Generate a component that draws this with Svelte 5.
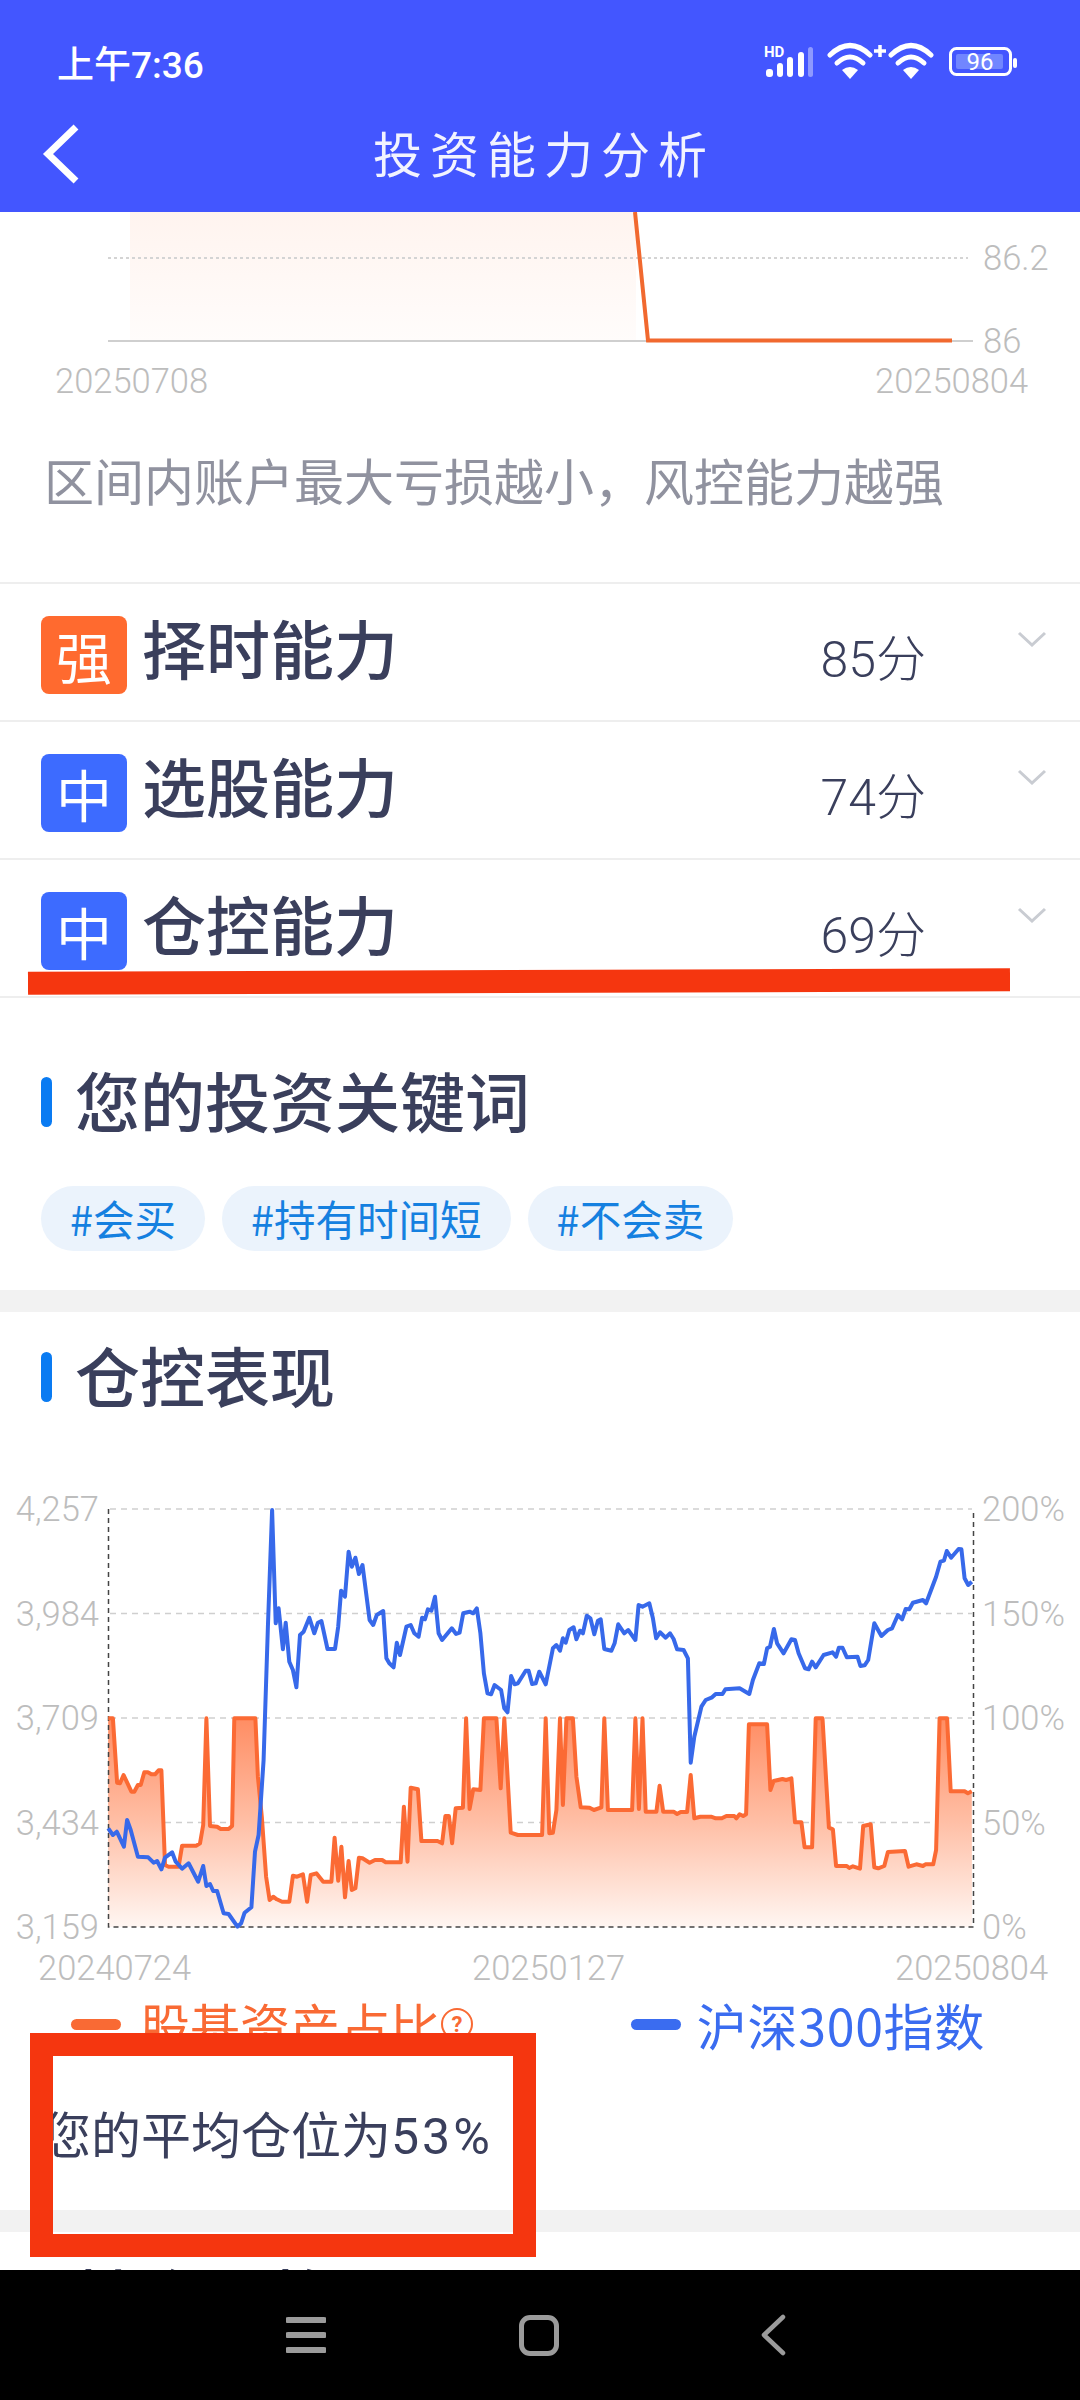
<script>
	// chart traces, taken in crop coordinates: the left crop starts at x 0 and the right one at x 520
	const leftOrange = [[303,775],[316,775],[328,968],[336,970],[346,945],[368,995],[376,995],[386,975],[394,975],[404,937],[414,937],[424,943],[434,943],[444,931],[452,931],[462,1215],[472,1220],[500,1220],[510,1157],[550,1157],[560,1150],[569,1095],[578,775],[588,1098],[608,1100],[618,1107],[640,1107],[650,1098],[656,775],[715,775],[722,950],[733,1070],[745,1250],[755,1320],[765,1310],[775,1318],[790,1325],[810,1325],[820,1247],[832,1250],[848,1243],[860,1325],[870,1245],[886,1240],[905,1265],[928,1265],[937,1133],[947,1262],[956,1160],[966,1312],[976,1203],[985,1290],[995,1285],[1005,1193],[1015,1195],[1035,1208],[1050,1200],[1070,1200],[1080,1207],[1122,1207],[1131,1040],[1141,1205],[1150,983],[1170,988],[1180,1143],[1225,1143],[1238,1150],[1247,1068],[1257,1068],[1266,1150],[1276,1045],[1296,1043],[1305,775],[1315,1047],[1325,988],[1345,990],[1355,775],[1390,775],[1402,985],[1412,775],[1430,1118],[1450,1125],[1518,1125],[1528,775],[1538,1120],[1548,1118],[1558,1050]];
	const rightOrange = [[112,775],[120,1035],[130,775],[148,775],[158,950],[170,1042],[195,1043],[207,1050],[228,1042],[236,775],[246,1050],[314,1050],[323,775],[333,1047],[343,775],[352,1055],[382,1055],[391,977],[401,1055],[430,1055],[440,1062],[450,1056],[468,1056],[478,945],[488,1075],[505,1070],[535,1070],[548,1075],[565,1075],[578,1068],[600,1068],[606,1075],[615,1063],[625,1068],[633,1063],[641,793],[692,793],[701,990],[710,963],[735,957],[745,960],[760,955],[770,1087],[788,1087],[797,1162],[818,1162],[828,775],[847,775],[865,1103],[876,1108],[885,1218],[915,1218],[922,1224],[932,1219],[952,1226],[961,1098],[982,1093],[992,1222],[1003,1225],[1020,1218],[1030,1176],[1078,1173],[1088,1220],[1110,1213],[1128,1218],[1135,1213],[1157,1213],[1165,1170],[1175,775],[1196,775],[1206,994],[1245,994],[1254,1000],[1265,994]];
	const leftBlue = [[303,1105],[316,1125],[327,1115],[347,1160],[356,1080],[366,1110],[386,1190],[415,1192],[430,1208],[440,1203],[452,1228],[462,1193],[482,1177],[492,1205],[510,1226],[528,1210],[555,1265],[569,1218],[578,1278],[588,1272],[597,1293],[608,1293],[626,1360],[640,1362],[665,1400],[675,1390],[685,1358],[704,1342],[714,1175],[724,1125],[738,900],[750,500],[762,150],[772,490],[780,445],[792,568],[800,488],[810,605],[820,630],[830,682],[840,525],[850,515],[866,473],[880,520],[890,488],[900,483],[917,567],[938,567],[947,500],[955,392],[966,410],[976,275],[985,320],[995,293],[1005,342],[1015,315],[1035,480],[1045,495],[1055,465],[1073,453],[1082,595],[1090,610],[1102,622],[1111,548],[1120,585],[1138,500],[1150,495],[1160,520],[1172,530],[1182,473],[1190,478],[1198,448],[1208,452],[1218,410],[1228,520],[1238,540],[1265,505],[1277,522],[1287,518],[1297,460],[1315,455],[1325,460],[1335,445],[1345,520],[1355,640],[1365,700],[1375,703],[1385,675],[1403,690],[1412,745],[1421,757],[1431,648],[1441,673],[1450,670],[1472,632],[1480,632],[1490,672],[1500,670],[1510,635],[1528,673],[1548,565],[1558,555]];
	const rightBlue = [[112,572],[120,535],[128,548],[138,510],[150,502],[158,538],[168,512],[176,520],[187,467],[197,475],[208,523],[218,482],[226,478],[236,567],[256,572],[265,550],[275,493],[292,520],[303,510],[323,540],[332,435],[343,440],[362,430],[372,475],[381,535],[392,517],[408,533],[420,520],[430,537],[440,568],[458,570],[470,595],[478,908],[488,830],[508,740],[520,720],[538,712],[548,702],[567,702],[575,688],[615,685],[642,702],[652,660],[670,610],[683,612],[692,565],[700,560],[711,507],[720,550],[738,580],[760,538],[770,540],[780,580],[798,625],[808,628],[818,605],[828,622],[850,585],[875,577],[885,590],[893,563],[903,563],[915,592],[945,590],[953,618],[965,616],[975,600],[992,490],[1012,528],[1030,510],[1042,505],[1058,465],[1070,478],[1080,447],[1090,448],[1100,428],[1128,420],[1137,430],[1165,350],[1177,305],[1187,302],[1195,273],[1207,293],[1228,267],[1236,268],[1245,355],[1255,375],[1265,365]];

	const SCALE_X = 2.8;
	const SCALE_Y = 3;

	function toSvg(left, right) {
		const a = left.map(([x, y]) => [x / SCALE_X, y / SCALE_Y]);
		const b = right.map(([x, y]) => [520 + x / SCALE_X, y / SCALE_Y]);
		return a.concat(b).map(([x, y]) => `${x.toFixed(1)},${y.toFixed(1)}`).join(' ');
	}

	const orangeLine = toSvg(leftOrange, rightOrange);
	const blueLine = toSvg(leftBlue, rightBlue);
	// y 467 is the chart's zero line inside this svg
	const orangeArea = `108,467 ${orangeLine} 972,467`;

	const gridY = [49, 153.5, 258, 362.5];
	const leftAxis = [['4,257', 49], ['3,984', 153.5], ['3,709', 258], ['3,434', 362.5], ['3,159', 467]];
	const rightAxis = [['200%', 49], ['150%', 153.5], ['100%', 258], ['50%', 362.5], ['0%', 467]];

	const abilities = [
		{ level: '强', name: '择时能力', score: 85, strong: true },
		{ level: '中', name: '选股能力', score: 74, strong: false },
		{ level: '中', name: '仓控能力', score: 69, strong: false }
	];

	const keywords = ['#会买', '#持有时间短', '#不会卖'];
</script>

<div class="page">
	<header class="header">
		<div class="status">
			<span class="time">上午7:36</span>
			<svg class="status-icons" width="256" height="40" viewBox="0 0 256 40">
				<text x="2" y="15" class="hd">HD</text>
				<g fill="#fff">
					<rect x="4" y="27" width="7" height="8" rx="3" />
					<rect x="15" y="21" width="6" height="14" rx="3" />
					<rect x="25" y="15" width="6" height="20" rx="3" />
					<rect x="36" y="10" width="6" height="25" rx="3" />
					<rect x="46" y="5" width="5" height="30" rx="2.500" opacity="0.4" />
				</g>
				<g fill="none" stroke="#fff" stroke-width="5" stroke-linecap="round">
					<path d="M68 13 Q88 -6 108 13" />
					<path d="M75 21 Q88 9 101 21" />
					<path d="M112 9 h12 M118 3 v12" stroke-width="3.500" stroke-linecap="butt" />
					<path d="M129 13 Q149 -6 169 13" />
					<path d="M136 21 Q149 9 162 21" />
				</g>
				<g fill="#fff">
					<path d="M80 28 Q88 22 96 28 L88 37 Z" />
					<path d="M141 28 Q149 22 157 28 L149 37 Z" />
				</g>
				<rect x="188.500" y="6.500" width="60" height="26" rx="6" fill="none" stroke="#fff" stroke-width="3" />
				<rect x="194" y="12" width="47" height="15" rx="2" fill="#7186ff" />
				<rect x="251" y="16" width="4" height="10" rx="2" fill="#fff" />
				<text x="218" y="28" class="batt">96</text>
			</svg>
		</div>
		<div class="navbar">
			<svg class="back" width="44" height="66" viewBox="0 0 44 66">
				<path d="M38 6 L10 33 L38 60" fill="none" stroke="#fff" stroke-width="7" />
			</svg>
			<h1>投资能力分析</h1>
		</div>
	</header>

	<main class="content">
		<svg class="trend" width="1080" height="198" viewBox="0 0 1080 198">
			<defs>
				<linearGradient id="trendFill" x1="0" y1="0" x2="0" y2="1">
					<stop offset="0" stop-color="#fff4ef" />
					<stop offset="1" stop-color="#fffcfb" />
				</linearGradient>
			</defs>
			<rect x="130" y="0" width="506" height="129" fill="url(#trendFill)" />
			<line x1="108" y1="46" x2="968" y2="46" stroke="#d4d4d4" stroke-width="2" stroke-dasharray="3 3" />
			<line x1="108" y1="129" x2="973" y2="129" stroke="#cfcfcf" stroke-width="2" />
			<path d="M635 0 L648 128.500 L952 128.500" fill="none" stroke="#f1692f" stroke-width="4" />
			<text x="983" y="58" class="axis">86.2</text>
			<text x="983" y="141" class="axis">86</text>
			<text x="55" y="181" class="axis">20250708</text>
			<text x="875" y="181" class="axis">20250804</text>
		</svg>

		<p class="desc">区间内账户最大亏损越小，风控能力越强</p>

		<ul class="abilities">
			{#each abilities as item}
				<li class="ability">
					<span class="badge" class:strong={item.strong}>{item.level}</span>
					<span class="name">{item.name}</span>
					<span class="score">{item.score}分</span>
					<svg class="chev" width="30" height="16" viewBox="0 0 30 16">
						<path d="M2 2 L15 14 L28 2" fill="none" stroke="#c9ccd2" stroke-width="3" />
					</svg>
				</li>
			{/each}
		</ul>

		<h2 class="heading first">您的投资关键词</h2>
		<div class="chips">
			{#each keywords as word}
				<span class="chip">{word}</span>
			{/each}
		</div>

		<div class="band"></div>

		<h2 class="heading">仓控表现</h2>
		<svg class="chart" width="1080" height="528" viewBox="0 0 1080 528">
			<defs>
				<linearGradient id="areaFill" x1="0" y1="0" x2="0" y2="1">
					<stop offset="0" stop-color="#ff8d63" />
					<stop offset="0.5" stop-color="#ffbfa6" />
					<stop offset="1" stop-color="#fff6f2" />
				</linearGradient>
			</defs>
			{#each gridY as y}
				<line x1="110" y1={y} x2="972" y2={y} stroke="#cfcfcf" stroke-width="1.500" stroke-dasharray="6 5" />
			{/each}
			<polygon points={orangeArea} fill="url(#areaFill)" />
			<path d="M108.500 49 V467 H973.500 V49" fill="none" stroke="#444" stroke-width="1.500" stroke-dasharray="5 4" />
			<polyline points={orangeLine} fill="none" stroke="#fb6a34" stroke-width="4" stroke-linejoin="round" />
			<polyline points={blueLine} fill="none" stroke="#3769ea" stroke-width="4" stroke-linejoin="round" />
			{#each leftAxis as [label, y]}
				<text x="99" y={y + 12} text-anchor="end" class="axis">{label}</text>
			{/each}
			{#each rightAxis as [label, y]}
				<text x="982" y={y + 12} class="axis">{label}</text>
			{/each}
			<text x="38" y="520" class="axis">20240724</text>
			<text x="472" y="520" class="axis">20250127</text>
			<text x="895" y="520" class="axis">20250804</text>
		</svg>

		<div class="legend">
			<div class="legend-item orange">
				<i></i>
				<span>股基资产占比</span>
				<svg width="34" height="34" viewBox="0 0 34 34">
					<circle cx="17" cy="17" r="15" fill="none" stroke="currentColor" stroke-width="2" />
					<text x="17" y="25" text-anchor="middle" class="help">?</text>
				</svg>
			</div>
			<div class="legend-item blue">
				<i></i>
				<span>沪深300指数</span>
			</div>
		</div>

		<p class="avg">您的平均仓位为<span class="pct">53%</span></p>

		<div class="band second"></div>

		<h2 class="heading next">持仓风格</h2>
	</main>

	<nav class="sysnav">
		<svg width="40" height="38" viewBox="0 0 40 38">
			<path d="M2 4 H38 M2 19 H38 M2 34 H38" stroke="#9b9b9b" stroke-width="6" stroke-linecap="round" />
		</svg>
		<span class="home"></span>
		<svg width="26" height="42" viewBox="0 0 26 42">
			<path d="M23 3 L4 21 L23 39" fill="none" stroke="#9b9b9b" stroke-width="4.500" stroke-linecap="round" stroke-linejoin="round" />
		</svg>
	</nav>

	<!-- hand-drawn annotations on top of the screenshot -->
	<div class="mark-line"></div>
	<div class="mark-box"></div>
</div>

<style>
	:global(body) {
		margin: 0;
		background: #fff;
	}

	.page {
		position: relative;
		display: flex;
		flex-direction: column;
		width: 1080px;
		height: 2400px;
		overflow: hidden;
		font-family: "Noto Sans CJK SC", "Noto Sans", sans-serif;
		color: #3a3f5c;
	}

	.header {
		flex: none;
		height: 212px;
		background: #4356ff;
		color: #fff;
	}

	.status {
		display: flex;
		align-items: center;
		justify-content: space-between;
		height: 88px;
		padding: 18px 62px 0 57px;
	}

	.time {
		font-family: Roboto, "Noto Sans CJK SC", sans-serif;
		font-size: 37px;
		font-weight: 500;
	}

	.hd {
		font: 700 15px Roboto, sans-serif;
		fill: #fff;
	}

	.batt {
		font: 400 24px Roboto, sans-serif;
		fill: #fff;
		text-anchor: middle;
	}

	.navbar {
		position: relative;
		display: flex;
		align-items: center;
		justify-content: center;
		height: 106px;
		padding-bottom: 14px;
		box-sizing: border-box;
	}

	.navbar h1 {
		margin: 0 0 0 8px;
		font-size: 49px;
		font-weight: 400;
		letter-spacing: 8px;
		line-height: 60px;
		color: #f2f3ff;
	}

	.back {
		position: absolute;
		left: 38px;
		top: 15px;
	}

	.content {
		flex: 1;
		min-height: 0;
		overflow: hidden;
	}

	svg {
		display: block;
	}

	.axis {
		font-family: Roboto, "Noto Sans", sans-serif;
		font-size: 34.500px;
		font-weight: 300;
		fill: #bdbdbd;
	}

	.desc {
		margin: 0;
		padding: 39px 0 0 44px;
		height: 172px;
		box-sizing: border-box;
		font-size: 50px;
		line-height: 60px;
		color: #90929f;
		white-space: nowrap;
	}

	.abilities {
		margin: 0;
		padding: 0;
		list-style: none;
		border-bottom: 2px solid #eeeeee;
	}

	.ability {
		display: flex;
		align-items: center;
		height: 138px;
		box-sizing: border-box;
		padding: 6px 33px 0 41px;
		border-top: 2px solid #eeeeee;
	}

	.badge {
		display: flex;
		align-items: center;
		justify-content: center;
		width: 86px;
		height: 78px;
		border-radius: 8px;
		background: #3d6bff;
		color: #fff;
		font-size: 56px;
		line-height: 1;
	}

	.badge.strong {
		background: #ff6a2f;
	}

	.name {
		margin: 0 0 18px 15px;
		font-size: 64px;
		font-weight: 500;
		line-height: 72px;
	}

	.score {
		margin-left: auto;
		font-family: Roboto, "Noto Sans CJK SC", sans-serif;
		font-size: 50px;
		font-weight: 300;
		color: #3a3f5c;
	}

	.chev {
		margin: 0 0 32px 91px;
	}

	.heading {
		position: relative;
		margin: 0;
		padding: 22px 0 0 75px;
		font-size: 65px;
		font-weight: 500;
		line-height: 80px;
	}

	.heading::before {
		content: "";
		position: absolute;
		left: 41px;
		bottom: 12px;
		width: 11px;
		height: 50px;
		border-radius: 6px;
		background: #0a7bf2;
	}

	.heading.first {
		padding-top: 61px;
	}

	.heading.next {
		padding-top: 24px;
	}

	.chips {
		display: flex;
		gap: 17px;
		margin: 47px 0 39px 41px;
	}

	.chip {
		height: 65px;
		padding: 0 29px;
		border-radius: 33px;
		background: #ebf3fc;
		color: #1580e0;
		font-size: 41.500px;
		line-height: 64px;
	}

	.band {
		height: 22px;
		background: #f2f2f2;
	}

	.chart {
		margin-top: 46px;
	}

	.legend {
		display: flex;
		justify-content: space-between;
		margin-top: 6px;
		padding: 0 95px 0 71px;
		font-size: 50px;
		line-height: 60px;
	}

	.legend-item {
		display: flex;
		align-items: center;
	}

	.legend-item i {
		width: 50px;
		height: 11px;
		margin-right: 19px;
		border-radius: 6px;
		background: currentColor;
	}

	.orange {
		color: #f96a34;
	}

	.blue {
		color: #3a6cf0;
		letter-spacing: 0.700px;
	}

	.blue i {
		margin-right: 16px;
	}

	.help {
		font: 700 22px Roboto, sans-serif;
		fill: currentColor;
	}

	.avg {
		margin: 43px 0 0 41px;
		font-size: 50px;
		line-height: 70px;
		color: #3a3f5c;
	}

	.pct {
		font-family: Roboto, sans-serif;
		letter-spacing: 3px;
	}

	.second {
		margin-top: 38px;
	}

	.sysnav {
		flex: none;
		position: relative;
		height: 130px;
		background: #000;
	}

	.sysnav svg:first-child {
		position: absolute;
		left: 286px;
		top: 46px;
	}

	.sysnav svg:last-child {
		position: absolute;
		left: 760px;
		top: 44px;
	}

	.home {
		position: absolute;
		left: 519px;
		top: 45px;
		width: 40px;
		height: 41px;
		box-sizing: border-box;
		border: 5px solid #9b9b9b;
		border-radius: 11px;
	}

	.mark-line {
		position: absolute;
		left: 28px;
		top: 970px;
		width: 982px;
		height: 23px;
		background: #f5360f;
		transform: rotate(-0.2deg);
	}

	.mark-box {
		position: absolute;
		left: 30px;
		top: 2033px;
		width: 506px;
		height: 224px;
		box-sizing: border-box;
		border: 23px solid #f5360f;
	}
</style>
